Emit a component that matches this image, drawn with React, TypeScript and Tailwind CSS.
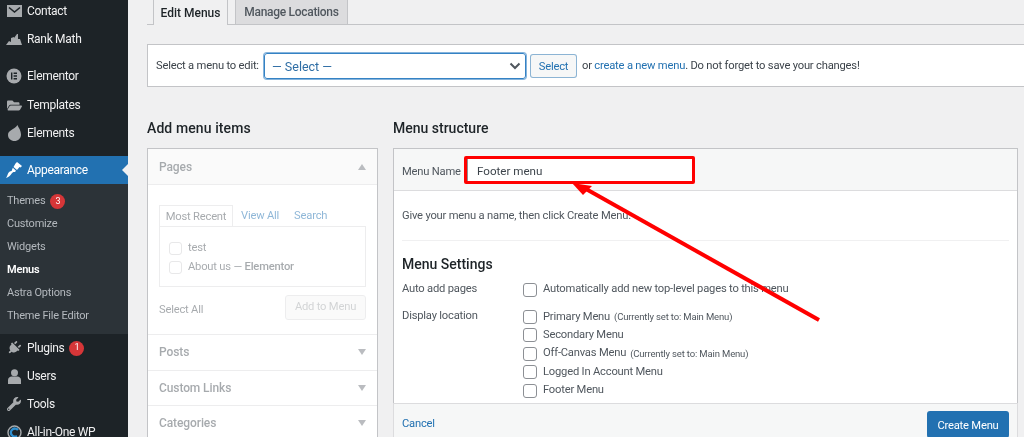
import { FaPlug, FaWrench, FaFolderOpen } from "react-icons/fa";

const font = "font-['Roboto','Noto_Sans',sans-serif]";
const body = "text-[11.2px] tracking-[-0.2px]";

function MenuRow({ icon, label, badge, className = "" }: { icon: React.ReactNode; label: string; badge?: string; className?: string }) {
  return (
    <div className={`flex h-7 shrink-0 items-center text-[12px] tracking-[-0.3px] text-[#f0f0f1] ${className}`}>
      <span className="flex w-[27px] shrink-0 justify-center pl-[1px] text-[#a7aaad]">{icon}</span>
      <span>{label}</span>
      {badge && <Badge n={badge} />}
    </div>
  );
}

function Badge({ n }: { n: string }) {
  return <span className="ml-[5px] flex h-[15px] w-[15px] items-center justify-center rounded-full bg-[#d63638] text-[9px] tracking-normal text-white">{n}</span>;
}

function SubRow({ label, current, badge }: { label: string; current?: boolean; badge?: string }) {
  return (
    <div className={`flex h-[23px] shrink-0 items-center pl-[7px] pt-[2px] text-[11px] tracking-[-0.2px] ${current ? "font-semibold text-white" : "text-[#b4b9be]"}`}>
      <span>{label}</span>
      {badge && <Badge n={badge} />}
    </div>
  );
}

function Sidebar() {
  return (
    <aside className="flex w-[128px] shrink-0 flex-col overflow-hidden bg-[#1d2327]">
      <div className="-mt-[3px] flex flex-col">
        <MenuRow
          label="Contact"
          icon={
            <svg width="15" height="12" viewBox="0 0 15 12">
              <path fill="#a7aaad" d="M0 0h15v12H0z" />
              <path fill="none" stroke="#1d2327" strokeWidth="1.6" d="M2 2.5l5.5 4.5L13 2.5" />
            </svg>
          }
        />
        <MenuRow
          label="Rank Math"
          className="mb-[9px]"
          icon={
            <svg width="16" height="12" viewBox="0 0 16 12" fill="#a7aaad">
              <path d="M0 12l3-4 2 1V5l3-1v1l3-4 1 0v5l2 0 2 6z" />
            </svg>
          }
        />
        <MenuRow
          label="Elementor"
          icon={
            <svg width="16" height="16" viewBox="0 0 16 16">
              <circle cx="8" cy="8" r="7.5" fill="#a7aaad" />
              <path fill="#1d2327" d="M5 4.5h1.4v7H5zM7.6 4.5H11v1.4H7.6zM7.6 7.3H11v1.4H7.6zM7.6 10.1H11v1.4H7.6z" />
            </svg>
          }
        />
        <MenuRow label="Templates" className="mt-[1px]" icon={<FaFolderOpen size={15} />} />
        <MenuRow
          label="Elements"
          className="mb-[9px]"
          icon={
            <svg width="13" height="16" viewBox="0 0 13 16" fill="#a7aaad">
              <path d="M9.5 0C10 2 13 5 13 9.5 13 13.5 10 16 6.5 16S0 13.5 0 10C0 5 6 5 9.5 0z" />
            </svg>
          }
        />
        <div className="relative flex h-7 shrink-0 items-center bg-[#2271b1] text-[12px] tracking-[-0.3px] text-white">
          <span className="flex w-[27px] shrink-0 justify-center pl-[1px]">
            <svg width="16" height="16" viewBox="0 0 16 16" fill="#fff">
              <path d="M9.5 1.5L11 0l5 4-1.500 1.500-1-.5-2.500 3-3.500-3z" />
              <path d="M6.800 5.800l3.200 3-1 1.300c-1.500-.3-2.500.2-3.500 1.700C4.500 13.500 2.500 15.500 0 16c1.200-1.500 1.500-3.500 2.300-5 .8-1.300 2-2 3.300-2z" />
            </svg>
          </span>
          <span>Appearance</span>
          <span className="absolute right-0 top-[8px] h-0 w-0 border-y-[6px] border-r-[6px] border-y-transparent border-r-[#f0f0f1]" />
        </div>
        <div className="flex flex-col bg-[#2c3338] pb-[7px] pt-[5px]">
          <SubRow label="Themes" badge="3" />
          <SubRow label="Customize" />
          <SubRow label="Widgets" />
          <SubRow label="Menus" current />
          <SubRow label="Astra Options" />
          <SubRow label="Theme File Editor" />
        </div>
        <MenuRow label="Plugins" badge="1" icon={<FaPlug size={14} className="rotate-45" />} />
        <MenuRow
          label="Users"
          icon={
            <svg width="13" height="15" viewBox="0 0 13 15" fill="#a7aaad">
              <circle cx="6.500" cy="3.800" r="3.500" />
              <path d="M0 11c0-2 2-3.500 3.500-3.500h6C11 7.500 13 9 13 11v4H0z" />
            </svg>
          }
        />
        <MenuRow label="Tools" icon={<FaWrench size={14} />} />
        <MenuRow
          label="All-in-One WP"
          icon={
            <svg width="15" height="15" viewBox="0 0 15 15" fill="none">
              <circle cx="7.500" cy="7.500" r="6.500" stroke="#a7aaad" strokeWidth="1.400" />
              <path d="M11 5a4 4 0 1 0-1 6" stroke="#2e8fd0" strokeWidth="2.400" />
            </svg>
          }
        />
      </div>
    </aside>
  );
}

function Tabs() {
  return (
    <div className="flex h-[25px] items-end gap-[7px] border-b border-[#c3c4c7] pl-[6px]">
      <div className="-mb-px flex h-[25px] w-[75px] items-center justify-center border-x border-[#c3c4c7] bg-[#f0f0f1] text-[12px] font-medium text-[#1d2327]">Edit Menus</div>
      <div className="flex h-[24px] w-[113px] items-center justify-center border-x border-[#c3c4c7] bg-[#dcdcde] text-[12px] font-medium tracking-[-0.3px] text-[#50575e]">Manage Locations</div>
    </div>
  );
}

function SelectBar() {
  return (
    <div className={`mt-[19px] flex h-[43px] items-center border border-r-0 border-[#c3c4c7] bg-white pl-[8px] text-[#3c434a] ${body}`}>
      <span className="w-[108px] whitespace-nowrap pt-[2px]">Select a menu to edit:</span>
      <div className="flex h-[26px] w-[262px] items-center justify-between rounded-[3px] border border-[#3582c4] pl-[7px] pr-[4px] text-[12.5px] tracking-normal text-[#2f6ea5] ring-1 ring-[#3582c4]/60">
        <span className="pt-[3px]">— Select —</span>
        <svg width="12" height="8" viewBox="0 0 12 8" fill="none"><path d="M1.500 1.500L6 6l4.500-4.500" stroke="#50575e" strokeWidth="2" /></svg>
      </div>
      <div className="ml-[4px] flex h-[24px] w-[47px] items-center justify-center rounded-[3px] border border-[#2271b1]/50 bg-[#f6f7f7] pt-[3px] text-[#2271b1]">Select</div>
      <span className="ml-[5px] pt-[2px]">or <span className="text-[#2271b1]">create a new menu</span>. Do not forget to save your changes!</span>
    </div>
  );
}

function AccordionHead({ label, open }: { label: string; open?: boolean }) {
  return (
    <div className={`flex items-center justify-between border-b border-[#dcdcde] px-[11px] text-[12px] font-medium tracking-[-0.1px] text-[#50575e] ${open ? "h-[36px] bg-[#f6f7f7]" : "h-[35.5px] bg-white"}`}>
      <span>{label}</span>
      <span className={`h-0 w-0 border-x-[4.5px] border-x-transparent ${open ? "border-b-[6px] border-b-[#787c82]" : "border-t-[6px] border-t-[#787c82]"}`} />
    </div>
  );
}

function LeftColumn() {
  return (
    <div className="flex w-[231px] shrink-0 flex-col">
      <h3 className="flex h-[20px] items-center pb-[2px] text-[14px] font-medium tracking-[0.1px] text-[#1d2327]">Add menu items</h3>
      <div className="mt-[9px] border border-[#c3c4c7] bg-white">
        <div className="opacity-50">
          <AccordionHead label="Pages" open />
          <div className={`h-[150px] border-b border-[#dcdcde] px-[11px] pt-[20px] text-[#50575e] ${body}`}>
            <div className="flex h-[21px] items-center">
              <div className="flex h-[21px] w-[74px] items-center justify-center border border-b-0 border-[#dcdcde] bg-white pt-[2px]">Most Recent</div>
              <span className="ml-[8px] pt-[2px] text-[#2271b1]">View All</span>
              <span className="ml-[15px] pt-[2px] text-[#2271b1]">Search</span>
            </div>
            <div className="flex h-[61px] flex-col border border-[#dcdcde] pl-[9px] pt-[12px]">
              <div className="flex h-[19px] items-center"><span className="mr-[6px] h-[13px] w-[13px] rounded-[3px] border border-[#8c8f94]/40" /><span>test</span></div>
              <div className="flex h-[19px] items-center"><span className="mr-[6px] h-[13px] w-[13px] rounded-[3px] border border-[#8c8f94]/40" /><span>About us — <span className="font-medium">Elementor</span></span></div>
            </div>
            <div className="mt-[8px] flex items-center justify-between">
              <span className="mt-[5px]">Select All</span>
              <span className="flex h-[25px] w-[81px] items-center justify-center rounded-[3px] border border-[#dcdcde] bg-[#f6f7f7] text-[#a7aaad]">Add to Menu</span>
            </div>
          </div>
          <AccordionHead label="Posts" />
          <AccordionHead label="Custom Links" />
          <AccordionHead label="Categories" />
        </div>
      </div>
    </div>
  );
}

function Check({ label, note }: { label: string; note?: string }) {
  return (
    <div className="flex h-[18.4px] items-center">
      <span className="h-[14px] w-[14px] shrink-0 rounded-[3px] border border-[#8c8f94] bg-white" />
      <span className="ml-[6px] whitespace-nowrap">{label}</span>
      {note && <span className="ml-[4px] whitespace-nowrap text-[9.5px] tracking-[-0.15px]">{note}</span>}
    </div>
  );
}

function RightColumn() {
  return (
    <div className="flex w-[625px] shrink-0 flex-col">
      <h3 className="flex h-[20px] items-center pb-[2px] text-[14px] font-medium text-[#1d2327]">Menu structure</h3>
      <div className={`mt-[9px] flex h-[300px] flex-col border border-[#c3c4c7] bg-white text-[#50575e] ${body}`}>
        <div className="flex h-[42px] shrink-0 items-center border-b border-[#dcdcde] bg-[#f6f7f7] pl-[8px]">
          <span className="w-[62px] whitespace-nowrap pt-[5px]">Menu Name</span>
          <div className="h-[28px] w-[231px] rounded-[2px] border-[3px] border-[#ff0000]">
            <div className="flex h-full items-center border-l border-[#8c8f94] bg-white pl-[9px] pt-[4px] text-[11.6px] tracking-normal text-[#3c434a]">Footer menu</div>
          </div>
        </div>
        <div className="flex min-h-0 flex-1 flex-col px-[8px]">
          <p className="mt-[17px]">Give your menu a name, then click Create Menu.</p>
          <div className="mt-[15px] border-t border-[#f0f0f1]" />
          <h4 className="mt-[13px] text-[14px] font-medium tracking-normal text-[#1d2327]">Menu Settings</h4>
          <div className="mt-[6px] flex h-[18px] items-center">
            <span className="w-[121px]">Auto add pages</span>
            <Check label="Automatically add new top-level pages to this menu" />
          </div>
          <div className="mt-[9px] flex">
            <span className="w-[121px]">Display location</span>
            <div className="flex flex-col">
              <Check label="Primary Menu" note="(Currently set to: Main Menu)" />
              <Check label="Secondary Menu" />
              <Check label="Off-Canvas Menu" note="(Currently set to: Main Menu)" />
              <Check label="Logged In Account Menu" />
              <Check label="Footer Menu" />
            </div>
          </div>
        </div>
      </div>
    </div>
  );
}

export default function App() {
  return (
    <div className={`relative flex h-[437px] w-[1024px] overflow-hidden bg-[#f0f0f1] blur-[0.3px] ${font}`}>
      <Sidebar />
      <main className="relative min-w-0 flex-1 pl-[19px]">
        <Tabs />
        <SelectBar />
        <div className="mt-[32px] flex gap-[15px]">
          <LeftColumn />
          <RightColumn />
        </div>
        <div className={`absolute left-[265px] top-[403px] flex h-[40px] w-[625px] items-start justify-between border border-[#dcdcde] bg-[#f6f7f7] pl-[8px] pr-[8px] pt-[7px] ${body}`}>
          <span className="mt-[5px] text-[#2271b1]">Cancel</span>
          <span className="flex h-[27px] w-[82px] items-center justify-center rounded-[3px] bg-[#2271b1] pt-[3px] text-white">Create Menu</span>
        </div>
      </main>
      <svg className="pointer-events-none absolute left-0 top-0" width="1024" height="437" viewBox="0 0 1024 437">
        <path d="M819 320L586 189" stroke="#ff0000" strokeWidth="4" fill="none" />
        <path d="M572 183L592 186L583 195Z" fill="#ff0000" />
      </svg>
    </div>
  );
}
